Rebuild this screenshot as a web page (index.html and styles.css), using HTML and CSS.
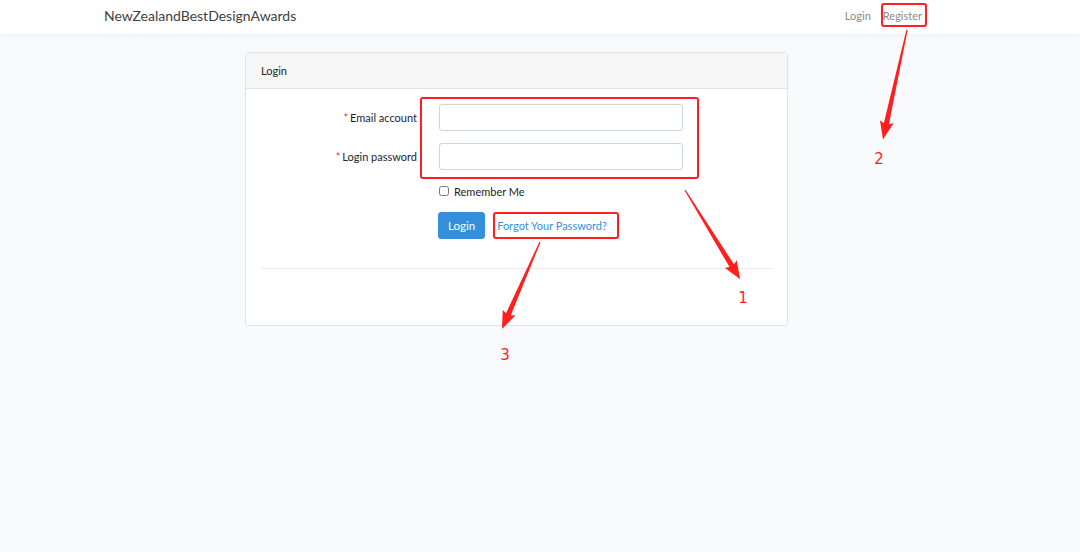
FILE: index.html
```html
<!DOCTYPE html>
<html lang="en">
<head>
  <meta charset="UTF-8">
  <meta name="viewport" content="width=device-width, initial-scale=1.0">
  <title>Login</title>
  <link rel="stylesheet" href="styles.css">
</head>
<body>
  <nav class="navbar">
    <div class="container nav-inner">
      <a class="brand" href="#">NewZealandBestDesignAwards</a>
      <ul class="nav-links">
        <li><a href="#">Login</a></li>
        <li><a href="#">Register</a></li>
      </ul>
    </div>
  </nav>

  <main class="container">
    <div class="card">
      <div class="card-header">Login</div>
      <div class="card-body">
        <form class="login-form">
          <label class="form-label" for="email"><span class="req">*</span>Email account</label>
          <input class="form-input" id="email" type="email">

          <label class="form-label" for="password"><span class="req">*</span>Login password</label>
          <input class="form-input" id="password" type="password">

          <div class="form-check">
            <input type="checkbox" id="remember">
            <label for="remember">Remember Me</label>
          </div>

          <div class="form-actions">
            <button type="button" class="btn">Login</button>
            <a class="btn-link" href="#">Forgot Your Password?</a>
          </div>
        </form>
        <hr class="divider">
      </div>
    </div>
  </main>

  <!-- annotations drawn over the screenshot -->
  <svg class="notes" width="1080" height="552" viewBox="0 0 1080 552">
    <g fill="none" stroke="#ff1f1f" stroke-width="2">
      <rect x="421" y="98" width="277" height="80" rx="2"/>
      <rect x="882" y="4" width="44" height="22" rx="2"/>
      <rect x="494" y="213" width="124" height="25" rx="2"/>
    </g>
    <g fill="#ff1f1f">
      <polygon transform="translate(685 190) rotate(58.3)" points="0,-0.6 89,-2.6 87,-7 105,0 87,7 89,2.6 0,0.6"/>
      <polygon transform="translate(907 30) rotate(102.4)" points="0,-0.6 96,-2.6 94,-7 112,0 94,7 96,2.6 0,0.6"/>
      <polygon transform="translate(540 242) rotate(113.6)" points="0,-0.6 79,-2.6 77,-7 95,0 77,7 79,2.6 0,0.6"/>
    </g>
    <g class="note-num" fill="#ff1f1f">
      <text x="743" y="303" text-anchor="middle">1</text>
      <text x="879" y="164" text-anchor="middle">2</text>
      <text x="505" y="360" text-anchor="middle">3</text>
    </g>
  </svg>
</body>
</html>
```

FILE: styles.css
```css
body {
  margin: 0;
  background-color: #f8fafc;
  color: #212529;
  font-family: Lato, "Open Sans", sans-serif;
  font-size: 11px;
}

.container {
  width: 826px;
  margin-left: 104px;
}

/* navbar */
.navbar {
  background-color: #fff;
  box-shadow: 0 2px 4px rgba(0, 0, 0, 0.04);
  height: 34px;
}

.nav-inner {
  display: flex;
  align-items: center;
  justify-content: space-between;
  height: 30px;
}

.brand {
  color: #3d4246;
  font-size: 14px;
  text-decoration: none;
}

.nav-links {
  display: flex;
  list-style: none;
  margin: 0 2px 0 0;
  padding: 0;
}

.nav-links a {
  display: block;
  padding: 0 6px;
  color: #8a8a8a;
  text-decoration: none;
  font-size: 11px;
}

/* card */
.card {
  width: 541px;
  margin: 18px 0 0 141px;
  background-color: #fff;
  border: 1px solid #e1e3e6;
  border-radius: 3px;
}

.card-header {
  background-color: #f7f7f7;
  border-bottom: 1px solid #e1e3e6;
  padding: 0 15px;
  height: 35px;
  line-height: 35px;
}

.card-body {
  padding: 15px 15px 56px;
}

.login-form {
  display: grid;
  grid-template-columns: 156px 244px;
  column-gap: 22px;
  row-gap: 12px;
  align-items: center;
}

.form-label {
  text-align: right;
}

.req {
  color: #e3342f;
  margin-right: 2px;
}

.form-input {
  box-sizing: border-box;
  height: 27px;
  width: 100%;
  border: 1px solid #ced4da;
  border-radius: 3px;
  background: #fff;
  margin: 0;
}

.form-check {
  grid-column: 2;
  display: flex;
  align-items: center;
  gap: 5px;
  height: 18px;
  margin-top: 0;
}

.form-check input {
  margin: 0;
  width: 10px;
  height: 10px;
}

.form-actions {
  grid-column: 2;
  display: flex;
  align-items: center;
  gap: 12px;
  margin-left: -1px;
}

.btn {
  height: 27px;
  padding: 0 9px;
  background-color: #3490dc;
  border: 1px solid #3490dc;
  border-radius: 3px;
  color: #fff;
  font-family: inherit;
  font-size: 11.5px;
}

.btn-link {
  color: #3490dc;
  text-decoration: none;
}

.divider {
  border: 0;
  border-top: 1px solid #ececec;
  margin: 29px 0 0;
}

/* annotation overlay */
.notes {
  position: absolute;
  top: 0;
  left: 0;
  pointer-events: none;
}

.note-num {
  font-family: "DejaVu Sans", sans-serif;
  font-size: 15px;
}
```
